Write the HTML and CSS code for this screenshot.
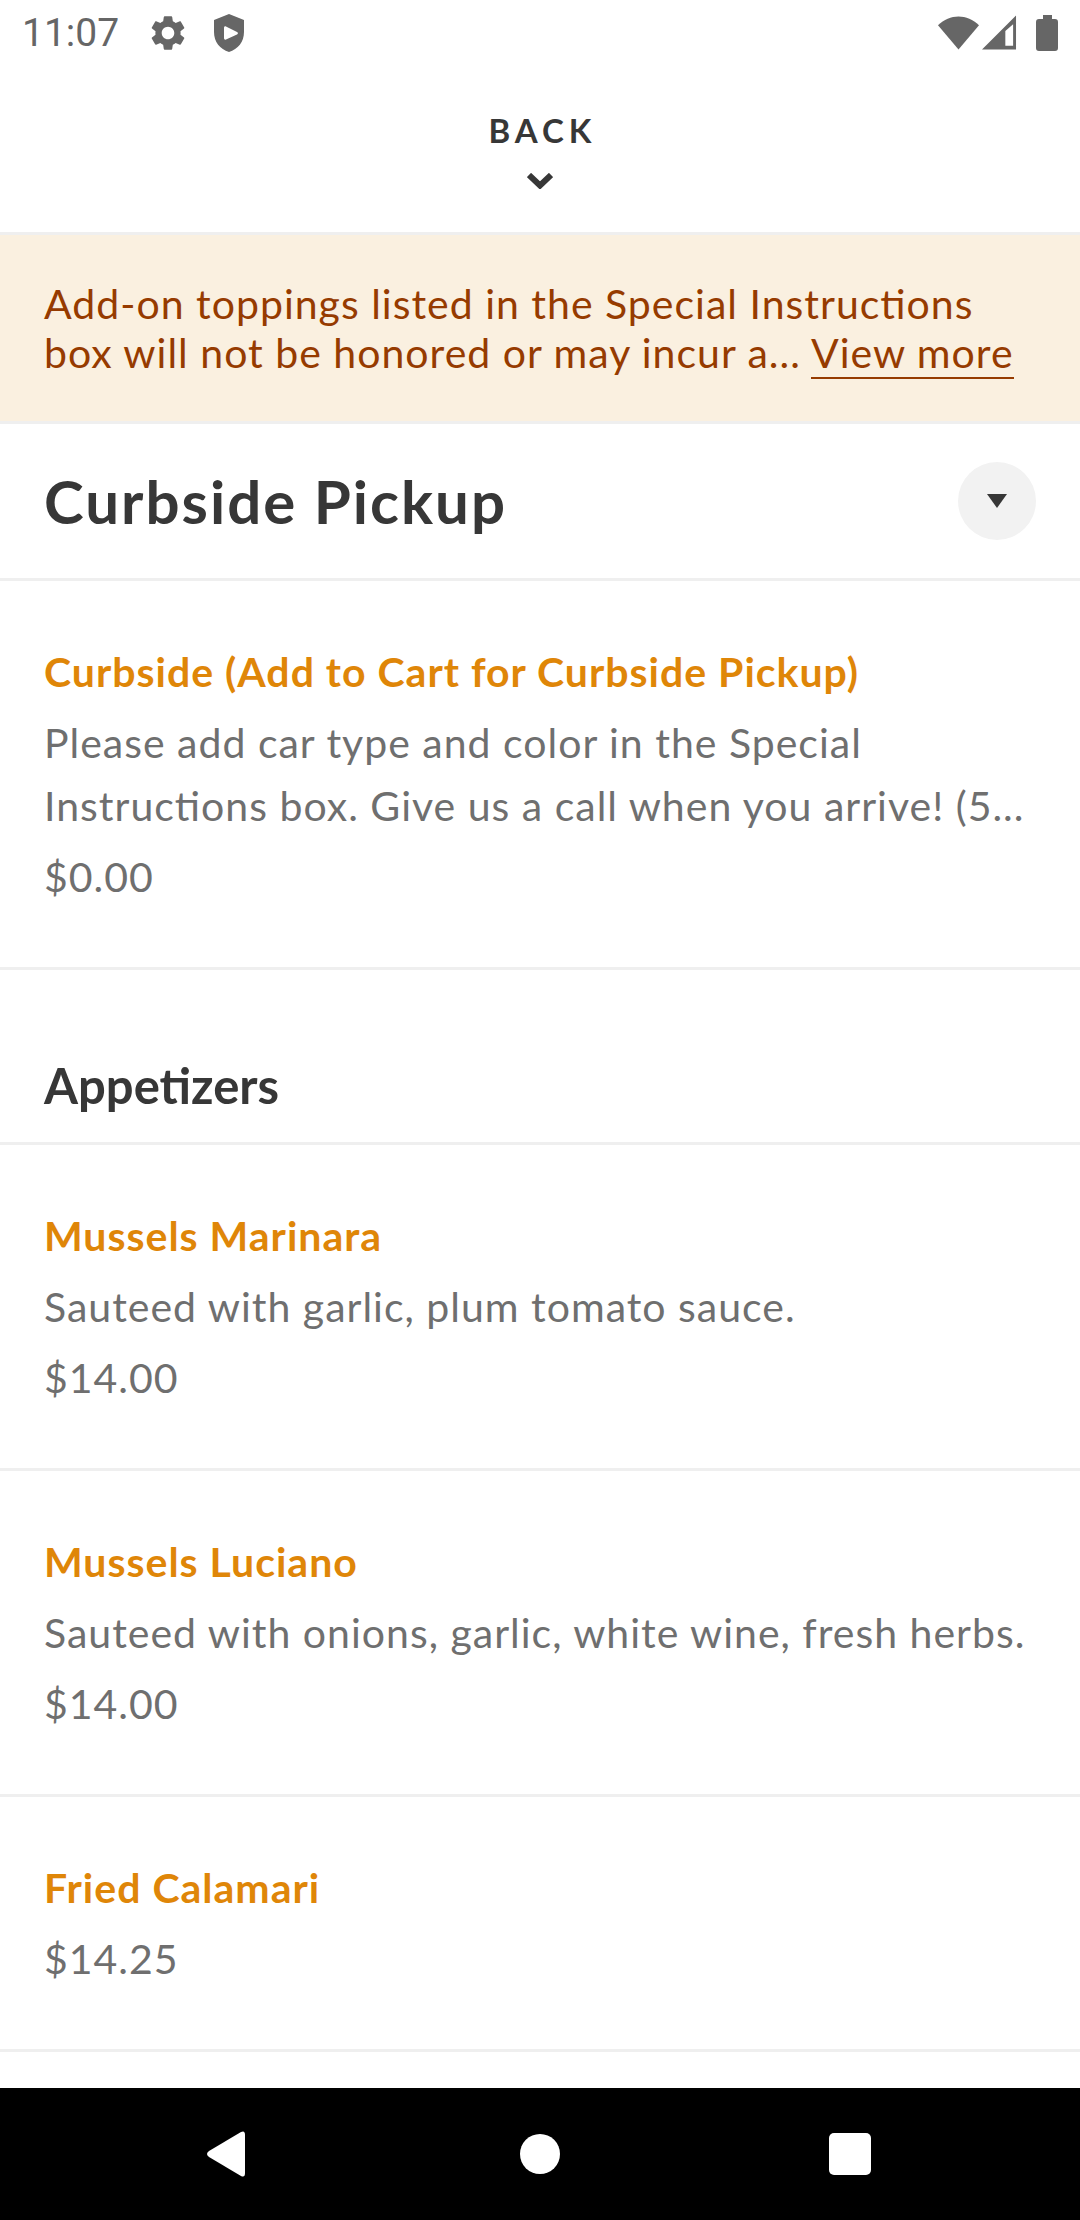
FILE: index.html
```html
<!DOCTYPE html>
<html lang="en">
<head>
    <meta charset="UTF-8">
    <meta name="viewport" content="width=device-width, initial-scale=1.0">
    <title>Menu</title>
    <link rel="stylesheet" href="styles.css">
</head>
<body>
    <div class="status-bar">
        <span class="time">11:07</span>
        <svg class="gear" width="42" height="42" viewBox="0 0 24 24"><path d="M19.14 12.94c.04-.3.06-.61.06-.94 0-.32-.02-.64-.07-.94l2.03-1.58c.18-.14.23-.41.12-.61l-1.92-3.32c-.12-.22-.37-.29-.59-.22l-2.39.96c-.5-.38-1.03-.7-1.62-.94L14.4 2.81c-.04-.24-.24-.41-.48-.41h-3.84c-.24 0-.43.17-.47.41L9.25 5.35c-.59.24-1.13.57-1.62.94l-2.39-.96c-.22-.08-.47 0-.59.22L2.74 8.87c-.12.21-.08.47.12.61l2.03 1.58c-.05.3-.09.63-.09.94s.02.64.07.94l-2.03 1.58c-.18.14-.23.41-.12.61l1.92 3.32c.12.22.37.29.59.22l2.39-.96c.5.38 1.03.7 1.62.94l.36 2.54c.05.24.24.41.48.41h3.84c.24 0 .44-.17.47-.41l.36-2.54c.59-.24 1.13-.56 1.62-.94l2.39.96c.22.08.47 0 .59-.22l1.92-3.32c.12-.22.07-.47-.12-.61l-2.01-1.58zM12 15.6c-1.98 0-3.6-1.62-3.6-3.6s1.62-3.6 3.6-3.6 3.6 1.62 3.6 3.6-1.62 3.6-3.6 3.6z"/></svg>
        <svg class="shield" width="32" height="38" viewBox="0 0 32 38"><path fill-rule="evenodd" d="M16 0L31 6v12c0 10-6 17-15 20C7 35 1 28 1 18V6zM11 14v10c0 1.500 1 2 2 1.500l11-5c1.200-.6 1.200-2 0-2.600l-11-5.500c-1-.5-2 0-2 1.600z"/></svg>
        <div class="status-right">
            <svg width="41" height="36" viewBox="0 0 42 36"><path d="M21 35L0 10C12-2 30-2 42 10z"/></svg>
            <svg width="35" height="36" viewBox="0 0 36 36"><path fill-rule="evenodd" d="M0 35L35 0v35zM24 16v15h8V9z"/></svg>
            <svg class="battery" width="22" height="36" viewBox="0 0 22 36"><path d="M7 0h9v4h3q3 0 3 3v26q0 3-3 3H3q-3 0-3-3V7q0-3 3-3h4z"/></svg>
        </div>
    </div>

    <header class="header">
        <button class="back-button">
            <span>BACK</span>
            <svg width="26" height="16" viewBox="0 0 26 16"><path d="M2 2l11 10.500L24 2" fill="none" stroke="#373737" stroke-width="6"/></svg>
        </button>
    </header>

    <div class="notice">
        Add-on toppings listed in the Special Instructions box will not be honored or may incur a... <a href="#">View more</a>
    </div>

    <div class="menu-title">
        <h1>Curbside Pickup</h1>
        <button class="toggle" aria-label="Choose menu section">
            <svg width="20" height="14" viewBox="0 0 20 14"><path d="M0 0h20L10 14z"/></svg>
        </button>
    </div>

    <main>
        <div class="item">
            <h3>Curbside (Add to Cart for Curbside Pickup)</h3>
            <p>Please add car type and color in the Special Instructions box. Give us a call when you arrive! (5...</p>
            <p>$0.00</p>
        </div>

        <h2 class="section-title">Appetizers</h2>
        <div class="item">
            <h3>Mussels Marinara</h3>
            <p>Sauteed with garlic, plum tomato sauce.</p>
            <p>$14.00</p>
        </div>
        <div class="item">
            <h3>Mussels Luciano</h3>
            <p>Sauteed with onions, garlic, white wine, fresh herbs.</p>
            <p>$14.00</p>
        </div>
        <div class="item">
            <h3>Fried Calamari</h3>
            <p>$14.25</p>
        </div>
    </main>

    <nav class="nav-bar">
        <button aria-label="Back"><svg width="46" height="46" viewBox="0 0 46 46"><path d="M2 20L34 1q4-2 4 3v38q0 5-4 3L2 26q-4-3 0-6z"/></svg></button>
        <button aria-label="Home"><svg width="40" height="40" viewBox="0 0 40 40"><circle cx="20" cy="20" r="20"/></svg></button>
        <button aria-label="Recent apps"><svg width="42" height="42" viewBox="0 0 42 42"><rect width="42" height="42" rx="5"/></svg></button>
    </nav>
</body>
</html>
```

FILE: styles.css
```css
* {
    box-sizing: border-box;
}

body {
    margin: 0;
    min-height: 100vh;
    display: flex;
    flex-direction: column;
    background: #fff;
    color: #6f6f6f;
    font-family: Lato, sans-serif;
    font-size: 41px;
    line-height: 63px;
    letter-spacing: 1px;
    font-feature-settings: "liga" 1;
}

h1, h2, h3, p {
    margin: 0;
}

button {
    border: none;
    padding: 0;
    background: none;
    font-family: inherit;
    cursor: pointer;
}

svg {
    display: block;
}

/* Status bar */
.status-bar {
    display: flex;
    align-items: center;
    height: 66px;
    padding: 0 22px;
    fill: #666;
}

.time {
    font-family: Roboto, sans-serif;
    font-size: 39px;
    letter-spacing: normal;
    color: #666;
}

.gear {
    margin-left: 28px;
}

.shield {
    margin-left: 24px;
}

.status-right {
    display: flex;
    gap: 3px;
    margin-left: auto;
}

.battery {
    margin-left: 16px;
}

/* Header */
.header {
    display: flex;
    justify-content: center;
    height: 169px;
    padding-top: 44px;
    border-bottom: 3px solid #efefef;
}

.back-button {
    display: flex;
    flex-direction: column;
    align-items: center;
    gap: 23px;
    height: 80px;
    color: #373737;
    font-size: 33px;
    font-weight: bold;
    line-height: 40px;
    letter-spacing: 5px;
}

.back-button span {
    padding-left: 5px;
}

.notice {
    padding: 44px;
    background: #faf0e0;
    border-bottom: 3px solid #efefef;
    color: #963b00;
    line-height: 49px;
}

.notice a {
    color: inherit;
    text-decoration: none;
    border-bottom: 2px solid #963b00;
}

.menu-title {
    display: flex;
    justify-content: space-between;
    align-items: center;
    padding: 38px 44px;
    border-bottom: 3px solid #efefef;
}

.menu-title h1 {
    color: #373737;
    font-size: 60px;
    line-height: 72px;
    letter-spacing: 2px;
}

.toggle {
    display: flex;
    align-items: center;
    justify-content: center;
    width: 78px;
    height: 78px;
    border-radius: 50%;
    background: #f2f2f2;
    fill: #373737;
}

/* Menu list */
.section-title {
    padding: 86px 44px 28px;
    border-bottom: 3px solid #efefef;
    color: #373737;
    font-size: 49px;
    line-height: 58px;
    letter-spacing: normal;
}

.item {
    display: flex;
    flex-direction: column;
    gap: 8px;
    padding: 59px 44px;
    border-bottom: 3px solid #efefef;
}

.item h3 {
    color: #df8608;
    font-size: 41px;
}

/* Bottom navigation */
.nav-bar {
    display: grid;
    grid-template-columns: repeat(3, 1fr);
    height: 132px;
    margin-top: auto;
    padding: 0 75px;
    background: #000;
}

.nav-bar button {
    display: flex;
    align-items: center;
    justify-content: center;
    fill: #fff;
}
```
